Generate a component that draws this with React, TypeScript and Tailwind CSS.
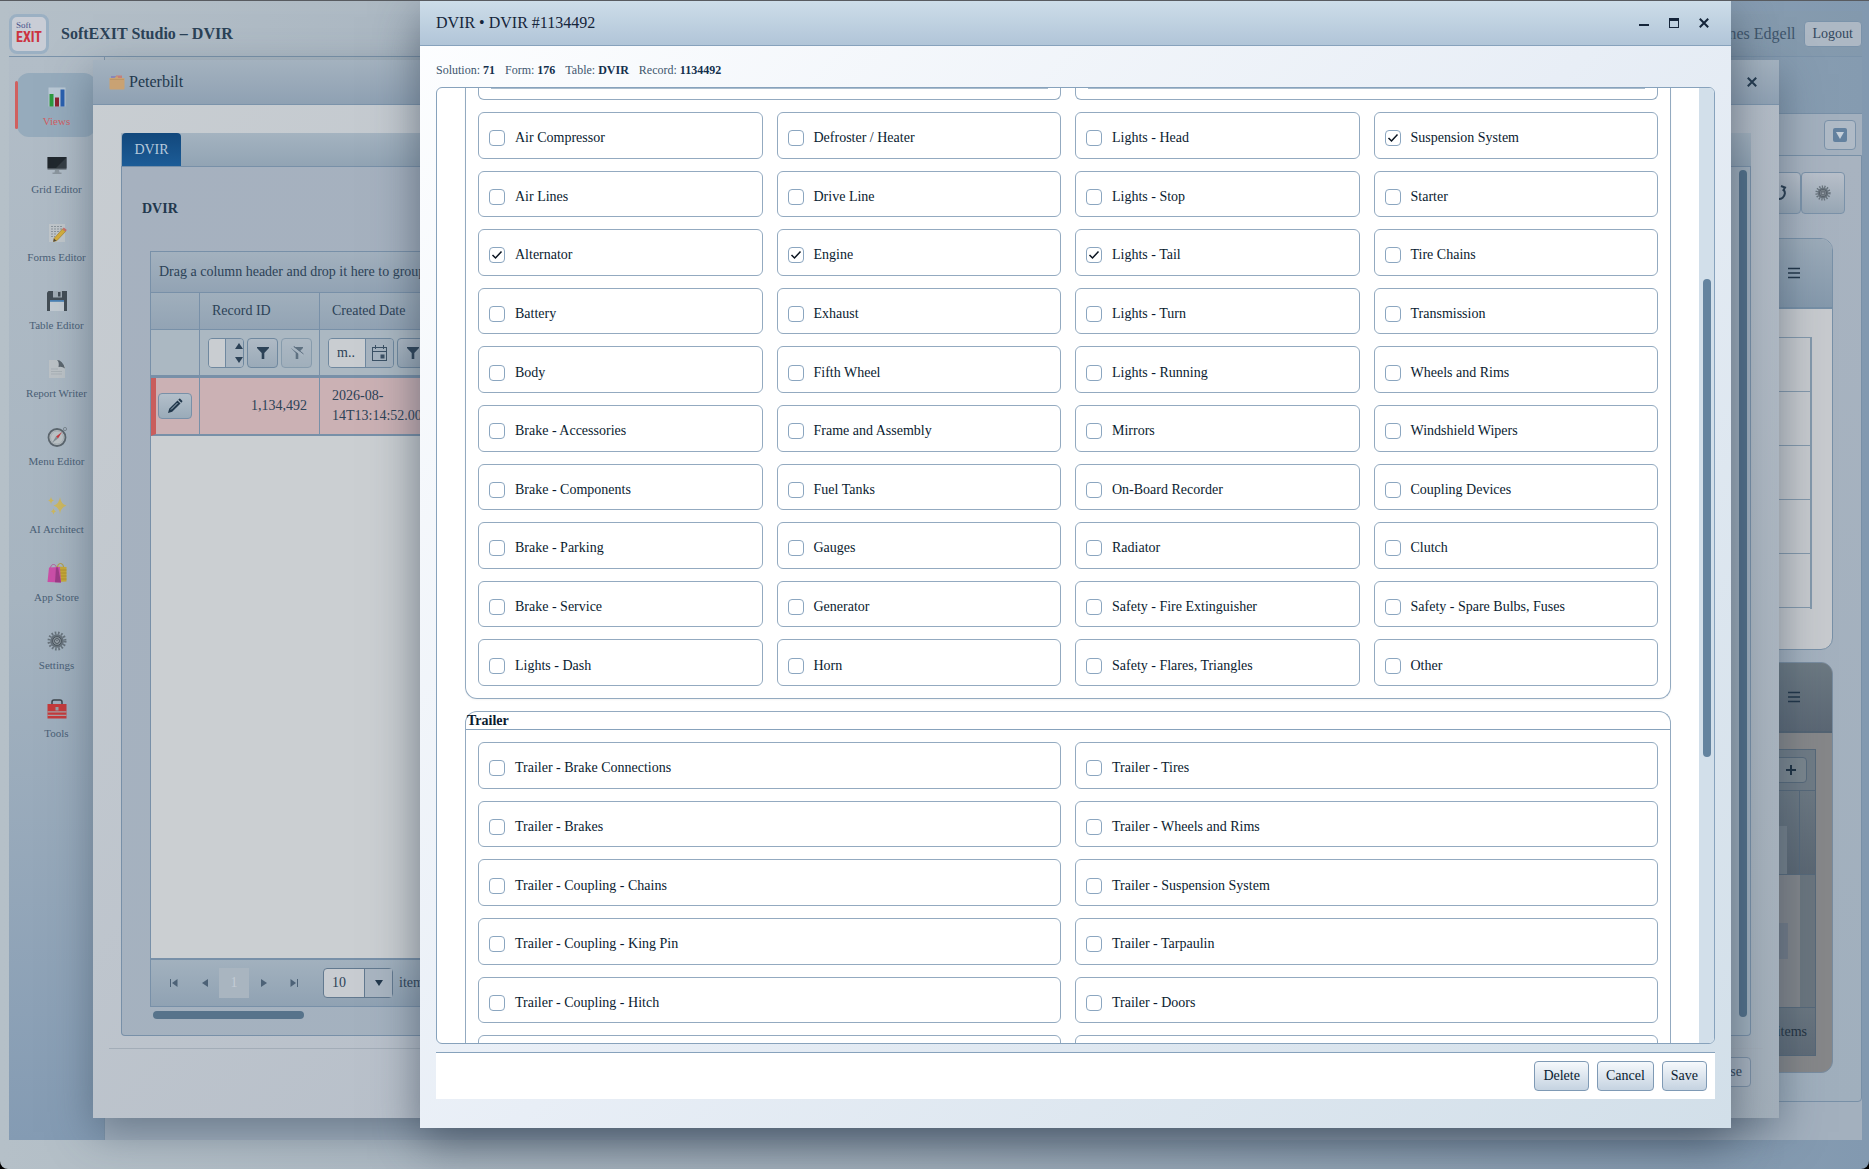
import type { ReactNode } from "react";
import clsx from "clsx";

const truckItems = [
  "Air Compressor", "Defroster / Heater", "Lights - Head", "Suspension System",
  "Air Lines", "Drive Line", "Lights - Stop", "Starter",
  "Alternator", "Engine", "Lights - Tail", "Tire Chains",
  "Battery", "Exhaust", "Lights - Turn", "Transmission",
  "Body", "Fifth Wheel", "Lights - Running", "Wheels and Rims",
  "Brake - Accessories", "Frame and Assembly", "Mirrors", "Windshield Wipers",
  "Brake - Components", "Fuel Tanks", "On-Board Recorder", "Coupling Devices",
  "Brake - Parking", "Gauges", "Radiator", "Clutch",
  "Brake - Service", "Generator", "Safety - Fire Extinguisher", "Safety - Spare Bulbs, Fuses",
  "Lights - Dash", "Horn", "Safety - Flares, Triangles", "Other",
];

const trailerItems = [
  "Trailer - Brake Connections", "Trailer - Tires",
  "Trailer - Brakes", "Trailer - Wheels and Rims",
  "Trailer - Coupling - Chains", "Trailer - Suspension System",
  "Trailer - Coupling - King Pin", "Trailer - Tarpaulin",
  "Trailer - Coupling - Hitch", "Trailer - Doors",
];

const checkedItems = ["Suspension System", "Alternator", "Engine", "Lights - Tail"];

function GearIcon({ size = 20 }: { size?: number }) {
  return (
    <svg width={size} height={size} viewBox="0 0 20 20">
      <circle cx="10" cy="10" r="8" fill="none" stroke="#68737c" strokeWidth="3" strokeDasharray="1.6 1.6" />
      <circle cx="10" cy="10" r="6.8" fill="#68737c" />
      <circle cx="10" cy="10" r="4.4" fill="#8a949c" stroke="#4c565f" strokeWidth="1" />
      <circle cx="10" cy="10" r="2.4" fill="#a9b2ba" stroke="#47515a" strokeWidth="1" />
      <path d="M10 8.8v1.6" stroke="#39434c" />
    </svg>
  );
}

const navItems: { label: string; icon: ReactNode }[] = [
  {
    label: "Views",
    icon: (
      <svg width="20" height="20" viewBox="0 0 20 20">
        <rect x="1.5" y="0.5" width="17" height="19" fill="#b9c8d4" />
        <rect x="2.5" y="7" width="4" height="12.5" fill="#2c9a3e" />
        <rect x="8" y="10.5" width="4" height="9" fill="#8e2230" />
        <rect x="13.5" y="2.5" width="4" height="17" fill="#2a5fae" />
      </svg>
    ),
  },
  {
    label: "Grid Editor",
    icon: (
      <svg width="20" height="20" viewBox="0 0 20 20">
        <path d="M8 15h4l.5 2.5h2V19h-9v-1.500h2z" fill="#8b959e" />
        <rect x="0.500" y="2" width="19" height="13" fill="#7d878f" />
        <rect x="0.500" y="2" width="19" height="11.500" fill="#20272d" />
        <path d="M19 3v10H9z" fill="#343c42" />
      </svg>
    ),
  },
  {
    label: "Forms Editor",
    icon: (
      <svg width="20" height="20" viewBox="0 0 20 20">
        <rect x="2" y="1" width="16" height="18" fill="#c0c6ca" />
        <path d="M4 3.500h12M4 6h11M4 8.500h9M4 11h6M4 13.500h4" stroke="#8b949b" strokeDasharray="2 1" />
        <path d="M7 15.500 15.500 6l3 2.500L10 17.500l-3.500 1z" fill="#d5ae3c" stroke="#9c7a2a" strokeWidth=".6" />
        <path d="m15.500 6 1.300-1.400 3 2.500-1.300 1.400z" fill="#cc6f68" />
        <path d="m7 15.500-.8 3.200 3.200-.9z" fill="#51483c" />
      </svg>
    ),
  },
  {
    label: "Table Editor",
    icon: (
      <svg width="20" height="20" viewBox="0 0 20 20">
        <path d="M0 1.500 1.500 0H20v20H0z" fill="#434d55" />
        <rect x="6" y="0" width="9" height="6.500" fill="#a1abb4" />
        <rect x="11" y="1" width="2.500" height="4.500" fill="#434d55" />
        <rect x="3" y="9" width="14" height="11" fill="#c3cbd2" />
        <rect x="3" y="9" width="14" height="1.800" fill="#4a80b4" />
      </svg>
    ),
  },
  {
    label: "Report Writer",
    icon: (
      <svg width="20" height="20" viewBox="0 0 20 20">
        <path d="M2 1h8q2 .5 2.500 5.500H18V19H2z" fill="#bcc2c6" />
        <path d="M10 1q5.500 0 8 8.500-3-2.500-6.500-1.500Q12.500 3 10 1z" fill="#5b656d" />
        <path d="M4 10h7M4 12.500h11M4 15h11" stroke="#a4acb2" strokeWidth=".8" />
      </svg>
    ),
  },
  {
    label: "Menu Editor",
    icon: (
      <svg width="22" height="20" viewBox="0 0 22 20">
        <circle cx="19" cy="2" r="1.600" fill="none" stroke="#7d8890" />
        <circle cx="11" cy="10.500" r="8.500" fill="#bcc2c5" stroke="#5c666e" strokeWidth="1.800" />
        <circle cx="11" cy="10.500" r="6.500" fill="none" stroke="#98a1a8" strokeWidth=".6" />
        <path d="m16 5-4 6.500-2-2z" fill="#c43b40" />
        <path d="m6 16 4-6.500 2 2z" fill="#828c94" />
      </svg>
    ),
  },
  {
    label: "AI Architect",
    icon: (
      <svg width="20" height="20" viewBox="0 0 20 20" fill="#cdb860">
        <path d="M13 2q.8 7 6.500 8.500Q13.800 12 13 19q-.8-7-6.500-8.500Q12.200 9 13 2z" />
        <path d="M4 1.500Q4.300 5 7 5.500 4.300 6 4 9.500 3.700 6 1 5.500 3.700 5 4 1.500z" />
        <path d="M6.500 13q.3 3 2.500 3.500-2.200.5-2.500 3-.3-2.500-2.500-3Q6.200 16 6.500 13z" />
      </svg>
    ),
  },
  {
    label: "App Store",
    icon: (
      <svg width="20" height="20" viewBox="0 0 20 20">
        <path d="M10.500 4q0-3.500 3-3.500t3 3.500" fill="none" stroke="#b59a34" />
        <path d="m9 3.500 10.500.5v14.500L9 19z" fill="#c8a938" />
        <path d="M11 7h8.500M11 10h8.500M11 13h8.500M11 16h8.500" stroke="#ac8d2c" strokeWidth=".8" />
        <path d="M3.500 6q0-4.500 3-4.500t3 4.500" fill="none" stroke="#b65f9e" />
        <path d="M2 4.500 13 4l1 15.500L.5 19z" fill="#cb4fa7" />
        <path d="m9 4.500 2-.3 3 15.300-6-.3z" fill="#9d3b87" />
      </svg>
    ),
  },
  { label: "Settings", icon: <GearIcon /> },
  {
    label: "Tools",
    icon: (
      <svg width="20" height="20" viewBox="0 0 20 20">
        <path d="M5 5.500V3q0-2 2-2h6q2 0 2 2v2.500" fill="none" stroke="#3c444b" strokeWidth="1.500" />
        <rect x="0.500" y="5" width="19" height="14.500" fill="#c53a3b" />
        <path d="M.5 12.800h19M.5 16.300h19" stroke="#a9a1a5" strokeWidth="1.200" />
        <rect x="8.500" y="8" width="3" height="3.500" fill="#98a0a6" />
      </svg>
    ),
  },
];

function HamburgerIcon() {
  return (
    <svg width="12" height="12" viewBox="0 0 12 12" stroke="#1f3346" strokeWidth="1.500">
      <path d="M0 1.500h12M0 6h12M0 10.500h12" />
    </svg>
  );
}

function CloseIcon() {
  return (
    <svg width="10" height="10" viewBox="0 0 10 10" stroke="currentColor" strokeWidth="2">
      <path d="m.8.8 8.400 8.400M9.200.8.800 9.200" />
    </svg>
  );
}

function FunnelIcon({ clear = false }: { clear?: boolean }) {
  return (
    <svg width="14" height="14" viewBox="0 0 14 14">
      <path d="M1 1h12v1L8.300 7v6H5.700V7L1 2z" fill="currentColor" />
      {clear && <path d="m1 .5 12 9" stroke="#a9b6c2" strokeWidth="2.500" />}
      {clear && <path d="m3.500 0 10 8" stroke="currentColor" />}
    </svg>
  );
}

function CheckCard({ label }: { label: string }) {
  return (
    <label className="flex items-center gap-2.5 rounded-md border border-[#93aac0] bg-white px-2.5 pt-1.5 text-sm text-[#0a1b30]">
      <span className="relative block size-4 shrink-0">
        <input
          type="checkbox"
          defaultChecked={checkedItems.includes(label)}
          className="peer block size-4 appearance-none rounded border border-[#8ba6c0] bg-white"
        />
        <svg viewBox="0 0 16 16" className="pointer-events-none absolute inset-0 hidden size-4 peer-checked:block">
          <path d="m3.500 8 3 3 6-6.500" fill="none" stroke="#0a1420" strokeWidth="1.500" />
        </svg>
      </span>
      {label}
    </label>
  );
}

function Sidebar() {
  return (
    <nav className="flex w-24 shrink-0 flex-col gap-1 border-r border-[#7f95aa] bg-linear-to-b from-[#b2bdc7] via-[#a6b4c0] to-[#849bb3] px-2 pt-4">
      {navItems.map((item, i) => (
        <a
          key={item.label}
          href="#"
          className={clsx(
            "relative flex h-16 flex-col items-center gap-1.5 rounded-xl pt-3.5 text-[11px] leading-4 whitespace-nowrap",
            i === 0 ? "bg-[#96abbc] text-[#d15f63]" : "text-[#4a6076]"
          )}
        >
          {i === 0 && <span className="absolute inset-y-2 -left-0.5 w-[3px] rounded-sm bg-[#d0605f]" />}
          <span className="flex h-5 items-center">{item.icon}</span>
          {item.label}
        </a>
      ))}
    </nav>
  );
}

function StudioPage() {
  return (
    <div className="flex h-full flex-col rounded-b-lg bg-linear-to-r from-[#b5c0c8] via-[#a3b0bc] to-[#8299b0] pt-2.5 pr-[7px] pb-[29px] pl-[9px]">
      <header className="flex h-[46px] shrink-0 items-center justify-between border-b border-[#7b93aa] bg-linear-to-r from-[#b4bfc8] via-[#a2b0bd] to-[#8399ad]">
        <div className="flex items-center gap-3">
          <div className="flex size-10 flex-col items-center justify-center rounded-lg border-3 border-[#9bb0c3] bg-[#c9cdd6]">
            <span className="self-start pl-1 text-[9px] leading-[7px] text-[#46508a]">Soft</span>
            <span className="font-['Roboto_Condensed','Open_Sans_Condensed','Liberation_Sans_Narrow',Lato,sans-serif] text-[14px] leading-4 font-bold text-[#cc3340]">EXIT</span>
          </div>
          <h1 className="text-base font-bold text-[#2b4257]">SoftEXIT Studio – DVIR</h1>
        </div>
        <div className="flex items-center gap-2 text-[#3f566c]">
          <span>James Edgell</span>
          <button className="h-[26px] rounded border border-[#7b93aa] bg-[#adb8c4] px-2 text-sm text-[#31475d]">Logout</button>
        </div>
      </header>

      <div className="flex min-h-0 flex-1">
        <Sidebar />
        <main className="flex min-w-0 flex-1 flex-col bg-[#a3b0be]">
          <div className="h-14 shrink-0 bg-linear-to-r from-[#b0bcc5] via-[#a0afbc] to-[#859bb0]" />
          <div className="flex h-[42px] shrink-0 items-center justify-end border-t border-[#7890a7] bg-[#a3b0be] pr-1.5">
            <button aria-label="Expand" className="flex h-[30px] w-8 items-center justify-center rounded border border-[#7b92a9] bg-[#afbac6]">
              <svg width="14" height="14" viewBox="0 0 14 14">
                <rect width="14" height="14" rx="2" fill="#63819f" />
                <path d="M3 4h8l-4 7z" fill="#c6d0da" />
              </svg>
            </button>
          </div>
          <section className="mb-[38px] flex min-h-0 flex-1 flex-col rounded-b border border-[#7890a7] bg-linear-to-b from-[#a8b3c0] to-[#a0afbd] pt-4 pb-7">
            <div className="flex shrink-0 justify-end pr-4">
              <button aria-label="Refresh" className="flex h-[42px] w-11 items-center justify-center rounded border border-[#7b92a9] bg-linear-to-b from-[#b9c0ca] to-[#98a7b5]">
                <svg width="16" height="16" viewBox="0 0 16 16" fill="none" stroke="#263a4d" strokeWidth="2">
                  <path d="M4 3.500a6 6 0 1 0 8.500.8" />
                  <path d="M10 1l4 1.500-2 3.500" />
                </svg>
              </button>
              <button aria-label="Settings" className="flex h-[42px] w-11 items-center justify-center rounded border border-[#7b92a9] bg-linear-to-b from-[#b9c0ca] to-[#98a7b5]">
                <GearIcon size={16} />
              </button>
            </div>
            <div className="mt-6 mr-7 flex min-h-0 flex-1 flex-col gap-3 pl-7">
              <article className="flex min-h-0 flex-1 flex-col overflow-hidden rounded-xl border border-[#7890a7] bg-[#c7cace]">
                <div className="flex h-[70px] shrink-0 items-center justify-end border-b-2 border-[#768fa6] bg-linear-to-b from-[#9cabb9] to-[#8599ac] pr-8">
                  <HamburgerIcon />
                </div>
                <div className="mt-7 mr-5 mb-10 flex min-h-0 flex-1 flex-col border-t border-r-2 border-[#8398ab]">
                  {[0, 1, 2, 3, 4].map((row) => (
                    <div key={row} className="flex-1 border-b border-[#8398ab]" />
                  ))}
                </div>
              </article>
              <article className="flex min-h-0 flex-1 flex-col overflow-hidden rounded-xl border border-[#788ca0] bg-[#868789]">
                <div className="flex h-[70px] shrink-0 items-center justify-end border-b-2 border-[#536372] bg-linear-to-b from-[#6c7982] to-[#5b6774] pr-8">
                  <HamburgerIcon />
                </div>
                <div className="mt-4 mr-4 mb-4 flex min-h-0 flex-1 flex-col border border-[#566879]">
                  <div className="flex h-[41px] shrink-0 items-center justify-end border-b border-[#566879] bg-[#6f7b85] pr-2">
                    <button aria-label="Add" className="flex h-[26px] w-8 items-center justify-center rounded border border-[#566879] bg-[#7a858d]">
                      <svg width="10" height="10" viewBox="0 0 10 10" stroke="#1c2f40" strokeWidth="2">
                        <path d="M5 0v10M0 5h10" />
                      </svg>
                    </button>
                  </div>
                  <div className="flex h-[84px] shrink-0 items-end justify-end border-b border-[#566879] bg-linear-to-b from-[#6c7882] to-[#5b6773]">
                    <div className="h-12 flex-1 bg-[#75808a]" />
                    <div className="h-full w-3" />
                    <div className="h-full w-4 border-l border-[#566879]" />
                  </div>
                  <div className="flex min-h-0 flex-1 items-center justify-end bg-[#82858a]">
                    <div className="mr-3 h-9 flex-1 bg-[#737b87]" />
                    <div className="h-full w-[15px] bg-[#6a757e]" />
                  </div>
                  <div className="flex h-12 shrink-0 items-center justify-end border-t border-[#566879] bg-linear-to-b from-[#6a7680] to-[#5f6b77] pr-2 text-sm text-[#22313f]">
                    0 - 0 of 0 items
                  </div>
                </div>
              </article>
            </div>
          </section>
        </main>
      </div>
    </div>
  );
}

function PagerButton({ label, children }: { label: string; children: ReactNode }) {
  return (
    <button aria-label={label} className="flex size-[30px] items-center justify-center text-[#4d6277]">
      <svg width="10" height="10" viewBox="0 0 10 10" fill="currentColor">
        {children}
      </svg>
    </button>
  );
}

function RecordsGrid() {
  const toolButton = "flex h-[30px] w-[31px] shrink-0 items-center justify-center rounded border border-[#6f889f] bg-linear-to-b from-[#afbac5] to-[#9aaab8]";

  return (
    <div className="flex min-h-0 flex-1 flex-col border border-[#7890a8] bg-[#cbcfd2] text-sm text-[#2c4257]">
      <div className="flex h-[41px] shrink-0 items-center border-b border-[#7890a8] bg-linear-to-b from-[#a3b1be] to-[#92a3b4] px-2">
        Drag a column header and drop it here to group by that column
      </div>
      <table className="w-full table-fixed border-separate border-spacing-0 text-left">
        <colgroup>
          <col className="w-[49px]" />
          <col className="w-[120px]" />
          <col />
        </colgroup>
        <thead>
          <tr className="h-[37px] bg-linear-to-b from-[#a0afbc] to-[#92a3b4]">
            <th className="border-r border-b border-[#7890a8]" />
            <th className="border-r border-b border-[#7890a8] px-3 font-normal">Record ID</th>
            <th className="border-b border-[#7890a8] px-3 font-normal">Created Date</th>
          </tr>
          <tr className="h-12 bg-[#abb8c2]">
            <td className="border-r border-b-3 border-[#7890a8]" />
            <td className="border-r border-b-3 border-[#7890a8] pl-2">
              <div className="flex gap-[3px]">
                <div className="flex h-[30px] w-9 shrink-0 overflow-hidden rounded border border-[#6f889f]">
                  <input aria-label="Record ID filter" className="min-w-0 flex-1 bg-[#c9cdd1]" />
                  <div className="flex w-[18px] flex-col items-end justify-around border-l border-[#6f889f] bg-[#a9b6c2]">
                    <svg width="8" height="6" viewBox="0 0 8 6" fill="#2c4257"><path d="M4 0l4 6H0z" /></svg>
                    <svg width="8" height="6" viewBox="0 0 8 6" fill="#2c4257"><path d="M4 6l4-6H0z" /></svg>
                  </div>
                </div>
                <button aria-label="Filter" className={toolButton}><FunnelIcon /></button>
                <button aria-label="Clear filter" className={clsx(toolButton, "opacity-60")}><FunnelIcon clear /></button>
              </div>
            </td>
            <td className="border-b-3 border-[#7890a8] pl-2">
              <div className="flex gap-[3px]">
                <div className="flex h-[30px] w-[66px] shrink-0 overflow-hidden rounded border border-[#6f889f]">
                  <input aria-label="Created Date filter" defaultValue="m.." className="min-w-0 flex-1 bg-[#c9cdd1] px-2" />
                  <button aria-label="Open calendar" className="flex w-7 items-center justify-center border-l border-[#6f889f] bg-[#a6b3bf]">
                    <svg width="15" height="16" viewBox="0 0 15 16" fill="none" stroke="#3b5165">
                      <rect x="0.500" y="2.500" width="14" height="13" />
                      <path d="M.5 6.500h14M3.500 0v4M11.500 0v4" />
                      <rect x="9" y="10" width="3" height="3" fill="#3b5165" />
                    </svg>
                  </button>
                </div>
                <button aria-label="Filter" className={toolButton}><FunnelIcon /></button>
              </div>
            </td>
          </tr>
        </thead>
        <tbody>
          <tr className="h-[58px] bg-[#cbb1b4]">
            <td className="border-r border-b-2 border-l-5 border-[#7890a8] border-l-[#c95d5c] pl-0.5">
              <button aria-label="Edit record" className="flex h-[26px] w-[34px] items-center justify-center rounded border border-[#7890a8] bg-linear-to-b from-[#b3bfca] to-[#9aabb9]">
                <svg width="16" height="16" viewBox="0 0 16 16" fill="#22384c">
                  <path d="m1 15 1.200-4.200L10.500 2.500l3 3L5.200 13.800z" />
                  <path d="m11.300 1.700.9-.9q.5-.5 1 0l2 2q.5.5 0 1l-.9.900z" />
                  <path d="m4 11.500 6.500-6.500" stroke="#a7b6c3" />
                </svg>
              </button>
            </td>
            <td className="border-r border-b-2 border-[#7890a8] px-3 text-right">1,134,492</td>
            <td className="border-b-2 border-[#7890a8] px-3 leading-5">2026-08-<br />14T13:14:52.000</td>
          </tr>
        </tbody>
      </table>
      <div className="mt-auto flex h-12 shrink-0 items-center border-t-2 border-[#7890a8] bg-linear-to-b from-[#a2b1be] to-[#90a2b3] pl-2">
        <PagerButton label="First page"><path d="M1 1h1v8H1zM8.500 1v8L3 5z" /></PagerButton>
        <PagerButton label="Previous page"><path d="M9 1v8L3 5z" /></PagerButton>
        <button className="size-[30px] bg-[#a9b5c0] text-[#c3ccd5]">1</button>
        <PagerButton label="Next page"><path d="M2 1v8l6-4z" /></PagerButton>
        <PagerButton label="Last page"><path d="M8 1h1v8H8zM1.500 1v8L7 5z" /></PagerButton>
        <div className="relative ml-3.5 h-[30px] w-[70px]">
          <select aria-label="Items per page" className="size-full appearance-none rounded border border-[#62798f] bg-[#c8ccd1] px-2">
            <option>10</option>
          </select>
          <div className="pointer-events-none absolute inset-y-px right-px flex w-7 items-center justify-center border-l border-[#62798f] bg-[#a9b5c1]">
            <svg width="8" height="6" viewBox="0 0 8 6" fill="#22384c"><path d="M4 6l4-6H0z" /></svg>
          </div>
        </div>
        <span className="ml-1.5">items per page</span>
      </div>
    </div>
  );
}

function PeterbiltWindow() {
  return (
    <div className="absolute top-[59px] right-[90px] bottom-[51px] left-[93px] flex flex-col bg-linear-135 from-[#c9ced2] via-[#b8c0ca] to-[#a3afba] shadow-[0_14px_40px_rgba(50,70,90,0.5)]">
      <div className="flex h-[45px] shrink-0 items-center gap-1 border-b border-[#7b93aa] bg-linear-to-b from-[#a4b2bf] to-[#8fa1b3] pr-5 pl-4 text-[#22384d]">
        <svg width="16" height="16" viewBox="0 0 16 16">
          <path d="M2 2h5v4H2z" fill="#8a87b8" />
          <path d="M7 1.500h6V6H7z" fill="#c4807a" />
          <path d="M.5 4h5l1.500-1.500h2V4h6.500v10.500q0 1-1 1h-13q-1 0-1-1z" fill="#c9a273" />
          <path d="M1 5.500h14" stroke="#b68f62" strokeWidth=".7" />
        </svg>
        <h2 className="text-base">Peterbilt</h2>
        <button aria-label="Close window" className="ml-auto p-0.5"><CloseIcon /></button>
      </div>
      <div className="mx-7 mt-7 flex min-h-0 flex-1 flex-col">
        <div className="flex h-[34px] shrink-0 border-b border-[#7890a8] bg-linear-to-b from-[#a4b3c0] to-[#92a4b4]">
          <button className="ml-px w-[59px] rounded-t bg-linear-to-b from-[#12487c] to-[#1c5c97] text-sm text-[#b6c9dc]">DVIR</button>
        </div>
        <div className="flex min-h-0 flex-1 rounded-b border border-t-0 border-[#7890a8] bg-linear-135 from-[#a6b1bf] to-[#a2b2bf]">
          <div className="flex min-w-0 flex-1 flex-col px-7">
            <h3 className="-ml-2 py-8 text-sm font-bold text-[#22384d]">DVIR</h3>
            <RecordsGrid />
            <div className="mt-1 mb-4 ml-[3px] h-2 w-[151px] shrink-0 rounded-full bg-[#57738b]" />
          </div>
          <div className="mt-[3px] mr-[3px] mb-[18px] w-2 rounded-full bg-[#52708a]" />
        </div>
      </div>
      <div className="mx-4 mt-3 flex h-[70px] shrink-0 items-start justify-end border-t border-[#a3adb8] pt-2 pr-3">
        <button className="h-[30px] rounded border border-[#7b90a6] bg-[#aab5c1] px-2 text-sm text-[#2c4257]">Close</button>
      </div>
    </div>
  );
}

function RecordDialog() {
  const footerButton = "h-[30px] rounded border border-[#7f9ab5] bg-linear-to-b from-[#f6f9fc] to-[#c5d3e1] px-2 text-sm text-[#0a1b30]";

  return (
    <div
      role="dialog"
      className="absolute top-0 right-[138px] bottom-[41px] left-[420px] flex flex-col bg-linear-135 from-[#fdfeff] via-[#e8eef6] to-[#d2dfe9] pb-[29px] shadow-[0_16px_44px_rgba(45,60,78,0.6)]"
    >
      <div className="flex h-[45px] shrink-0 items-center border-b border-[#87a2bc] bg-linear-to-b from-[#cddde9] to-[#b1c5d8] pr-5 pl-4 text-[#15253a]">
        <h2 className="text-base">DVIR • DVIR #1134492</h2>
        <div className="ml-auto flex items-center gap-4">
          <button aria-label="Minimize" className="p-0.5">
            <svg width="10" height="10" viewBox="0 0 10 10" fill="currentColor"><path d="M0 6h10v2H0z" /></svg>
          </button>
          <button aria-label="Maximize" className="p-0.5">
            <svg width="10" height="10" viewBox="0 0 10 10" fill="currentColor"><path d="M0 0h10v10H0zM1 3v6h8V3z" fillRule="evenodd" /></svg>
          </button>
          <button aria-label="Close" className="p-0.5"><CloseIcon /></button>
        </div>
      </div>

      <div className="mx-4 flex gap-2.5 pt-4 pb-[9px] text-xs text-[#40566d]">
        <span>Solution: <b className="text-[#14304d]">71</b></span>
        <span>Form: <b className="text-[#14304d]">176</b></span>
        <span>Table: <b className="text-[#14304d]">DVIR</b></span>
        <span>Record: <b className="text-[#14304d]">1134492</b></span>
      </div>

      <div className="mx-4 flex min-h-0 flex-1 overflow-hidden rounded-md border border-[#87a2bc] bg-white">
        <div className="flex min-w-0 flex-1 flex-col gap-3 px-7">
          <section className="flex shrink-0 flex-col gap-3 rounded-b-xl border border-t-0 border-[#93aac0] px-3 pb-3 shadow-xs">
            <div className="grid h-3 grid-cols-2 gap-3.5">
              <div className="rounded-b-md border border-t-0 border-[#93aac0] px-3">
                <div className="border-t border-[#a9bccd]" />
              </div>
              <div className="rounded-b-md border border-t-0 border-[#93aac0] px-3">
                <div className="border-t border-[#a9bccd]" />
              </div>
            </div>
            <div className="grid min-h-[574px] auto-rows-fr grid-cols-4 gap-x-3.5 gap-y-3">
              {truckItems.map((label) => (
                <CheckCard key={label} label={label} />
              ))}
            </div>
          </section>
          <section className="shrink-0 rounded-t-xl border border-b-0 border-[#93aac0]">
            <h3 className="border-b border-[#87a2bc] pl-px text-sm leading-[17px] font-bold text-[#0a1b30]">Trailer</h3>
            <div className="grid min-h-[364px] auto-rows-fr grid-cols-2 gap-x-3.5 gap-y-3 p-3">
              {trailerItems.map((label) => (
                <CheckCard key={label} label={label} />
              ))}
              <div className="rounded-md border border-[#93aac0]" />
              <div className="rounded-md border border-[#93aac0]" />
            </div>
          </section>
        </div>
        {/* scrollbar: thumb covers half of the track, one fifth of the way down */}
        <div className="flex w-[15px] shrink-0 flex-col items-center bg-[#d2dfea]">
          <div className="h-1/5" />
          <div className="h-1/2 w-2 rounded-full bg-[#63839f]" />
        </div>
      </div>

      <div className="mx-4 mt-2 flex h-[47px] shrink-0 items-center justify-end gap-2 border-t border-[#87a2bc] bg-white pr-2">
        <button className={footerButton}>Delete</button>
        <button className={footerButton}>Cancel</button>
        <button className={footerButton}>Save</button>
      </div>
    </div>
  );
}

export default function App() {
  return (
    <div className="relative h-screen overflow-hidden border-t border-[#585b60] bg-black font-['Liberation_Serif','Times_New_Roman',serif]">
      <StudioPage />
      <PeterbiltWindow />
      <RecordDialog />
    </div>
  );
}
